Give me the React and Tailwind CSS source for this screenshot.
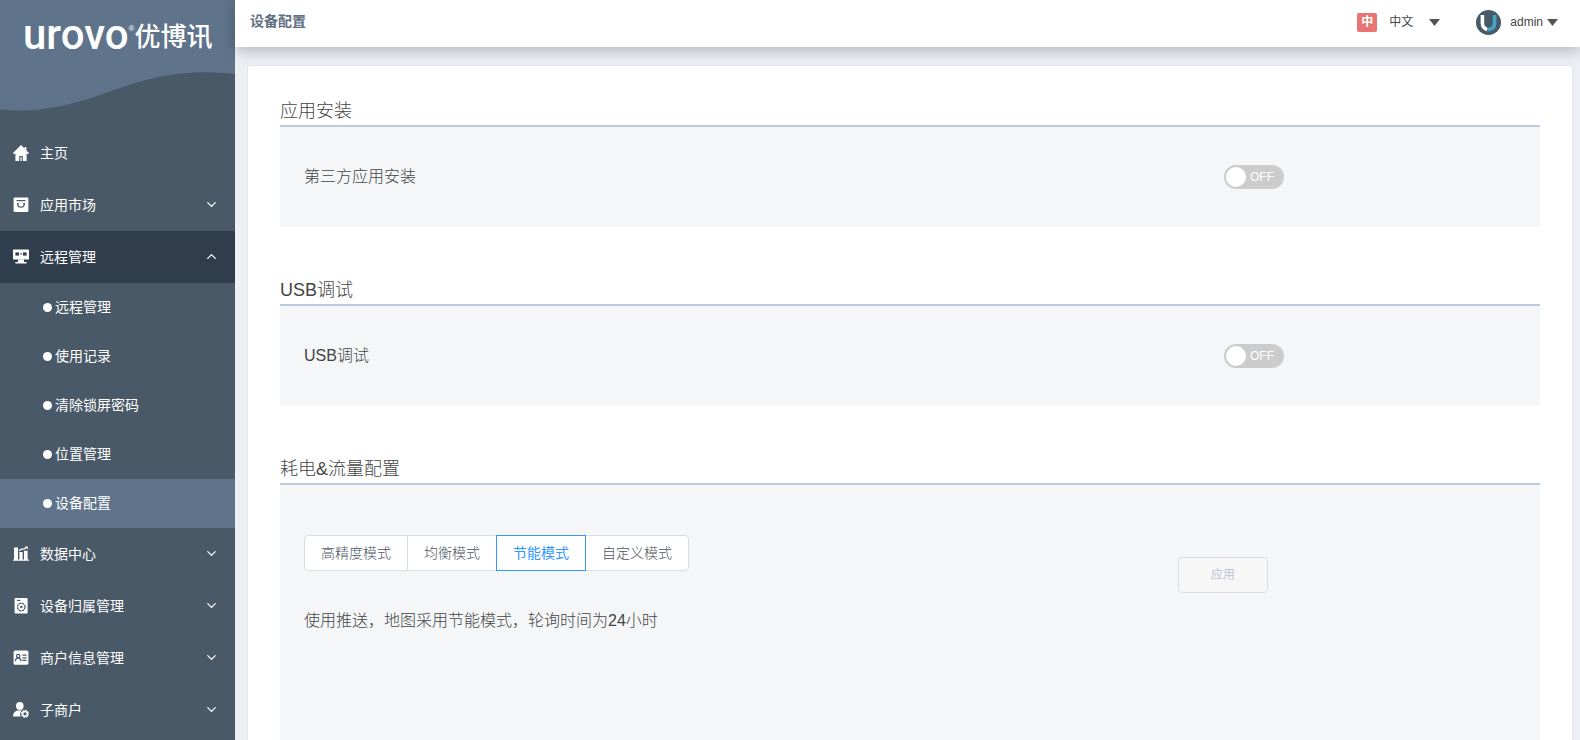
import { useState } from "react";
import { ChevronDown, ChevronUp } from "lucide-react";

const HomeIcon = () => (
  <svg viewBox="0 0 16 16" className="size-4" fill="#fff">
    <path d="M8 0 0 8v.8h2.400V16h3.800v-5h3.600v5h3.800V8.800H16V8L13.400 5.400V2h-1.800v1.600z" />
    <path d="M7.400 12h1.200v4H7.400z" />
  </svg>
);

const MarketIcon = () => (
  <svg viewBox="0 0 16 16" className="size-4" fill="none">
    <rect x="0.6" y="0.6" width="14.8" height="14.4" rx="1.2" fill="#fff" />
    <path d="M3.5 3.6h9" stroke="#4a5967" strokeWidth="1.2" />
    <path d="M4.8 6.600v.6a3.200 3 0 0 0 6.400 0v-.6" stroke="#4a5967" strokeWidth="1.2" />
    <path d="M4 6.600h1.800M10.200 6.600H12" stroke="#4a5967" strokeWidth="1.2" />
  </svg>
);

const RemoteIcon = () => (
  <svg viewBox="0 0 16 16" className="size-4" fill="#fff">
    <rect y="0.4" width="16" height="10" rx="0.6" />
    <path d="M5 10.400h6v2.600H13.600V14.400H2.400V13H5z" />
    <rect x="2.4" y="3.4" width="3.6" height="3.2" fill="#2f3d4c" />
    <rect x="10" y="3.4" width="3.6" height="3.2" fill="#2f3d4c" />
    <path d="M7 5h2" stroke="#2f3d4c" />
  </svg>
);

const DataIcon = () => (
  <svg viewBox="0 0 16 16" className="size-4" fill="#fff">
    <path d="M0 13.400h16V14.800H0zM1 1.400h4v12H1zM6.400 6h3.200v7.400H6.400zM11 4.800h3.600v8.600H11z" />
    <path d="M6 4.800 8.400 3.200h2.400L13.600 1.400" stroke="#fff" strokeWidth="1.3" fill="none" />
    <path d="M11.800.6h3v2.800z" />
  </svg>
);

const DeviceIcon = () => (
  <svg viewBox="0 0 16 16" className="size-4" fill="none">
    <rect x="1.6" y="0" width="13" height="15.4" rx="1.2" fill="#fff" />
    <path d="M4 2.4h3.400" stroke="#4a5967" strokeWidth="1.2" />
    <circle cx="8.3" cy="9" r="3.8" stroke="#4a5967" strokeWidth="1.3" strokeDasharray="2.4 0.6" />
    <circle cx="8.3" cy="9" r="1.2" fill="#4a5967" />
  </svg>
);

const MerchantIcon = () => (
  <svg viewBox="0 0 16 16" className="size-4" fill="none" stroke="#4a5967" strokeWidth="1.2">
    <rect x="0.6" y="0.6" width="14.8" height="14.2" rx="1.6" fill="#fff" stroke="none" />
    <circle cx="5.2" cy="6" r="1.7" />
    <path d="M2.300 11.200c.2-2.200 1.400-3.300 2.900-3.300s2.700 1.100 2.900 3.300M9.400 5.200H13.500M9.400 7.800H13.500M9.400 10.400H13.500" />
  </svg>
);

const SubMerchantIcon = () => (
  <svg viewBox="0 0 16 16" className="size-4" fill="#fff">
    <ellipse cx="6.800" cy="4" rx="3.800" ry="4" />
    <path d="M0 14.400c0-3.600 1.800-5.400 4.600-6h4.400c-1.800 1.400-2.400 3.600-1.400 6z" />
    <circle cx="12" cy="11.800" r="2.500" fill="none" stroke="#fff" strokeWidth="1.700" />
    <circle cx="12" cy="11.800" r="3.700" fill="none" stroke="#fff" strokeWidth="0.900" strokeDasharray="1.600 1.300" />
  </svg>
);

const menu = [
  { label: "主页", icon: HomeIcon },
  { label: "应用市场", icon: MarketIcon, children: [] },
  {
    label: "远程管理",
    icon: RemoteIcon,
    open: true,
    children: ["远程管理", "使用记录", "清除锁屏密码", "位置管理", "设备配置"],
  },
  { label: "数据中心", icon: DataIcon, children: [] },
  { label: "设备归属管理", icon: DeviceIcon, children: [] },
  { label: "商户信息管理", icon: MerchantIcon, children: [] },
  { label: "子商户", icon: SubMerchantIcon, children: [] },
];

const modes = ["高精度模式", "均衡模式", "节能模式", "自定义模式"];

function Caret() {
  return (
    <svg viewBox="0 0 11 7" className="h-[7px] w-[11px]" fill="#555">
      <path d="M0 0h11L5.500 7z" />
    </svg>
  );
}

function Logo() {
  return (
    <div className="relative h-[127px] bg-[#5f748b]">
      <svg viewBox="0 0 235 127" preserveAspectRatio="none" className="absolute inset-0 size-full">
        <path d="M0 109.500C40 114 75 104 110 91.500S180 68 235 74V127H0z" fill="#4a5967" />
      </svg>
      <div className="relative flex h-[74px] items-center whitespace-nowrap pl-[23px] leading-none text-white">
        <span className="-mt-1 font-[Roboto] text-[42px] font-medium">urovo</span>
        <sup className="-mt-2 text-[8px]">®</sup>
        <span className="text-[26px] font-medium">优博讯</span>
      </div>
    </div>
  );
}

function Sidebar() {
  const [active, setActive] = useState("设备配置");

  return (
    <aside className="w-[235px] shrink-0 bg-[#4a5967] text-sm text-white">
      <Logo />
      <nav>
        {menu.map(({ label, icon: Icon, open, children }) => (
          <div key={label}>
            <button
              type="button"
              aria-expanded={children ? Boolean(open) : undefined}
              className={`flex h-[52px] w-full items-center pb-px pl-[13px] pr-4 ${open ? "bg-[#2f3d4c]" : ""}`}
            >
              <Icon />
              <span className="ml-[11px] flex-1 text-left">{label}</span>
              {children && (open ? <ChevronUp size={15} strokeWidth={2} /> : <ChevronDown size={15} strokeWidth={2} />)}
            </button>
            {open &&
              children.map((item) => (
                <a
                  key={item}
                  href="#"
                  onClick={() => setActive(item)}
                  className={`flex h-[49px] items-center gap-[3px] pb-px pl-[43px] ${item === active ? "bg-[#5f748b]" : ""}`}
                >
                  <span className="size-[9px] rounded-full bg-white" />
                  {item}
                </a>
              ))}
          </div>
        ))}
      </nav>
    </aside>
  );
}

function Header() {
  return (
    <header className="relative z-10 flex h-[47px] items-center justify-between bg-white pb-[3px] pl-[15px] pr-[22px] text-xs text-[#444] shadow-[0_4px_14px_rgba(0,0,0,0.24)]">
      <h1 className="pb-0.5 text-sm font-bold text-[#5f6f80]">设备配置</h1>
      <div className="flex items-center">
        <button type="button" aria-haspopup="true" className="flex items-center">
          <span className="flex h-[19px] w-5 items-center justify-center rounded-xs bg-[#e87474] font-bold text-white">中</span>
          <span className="ml-3 mr-4">中文</span>
          <Caret />
        </button>
        <button type="button" aria-haspopup="true" className="ml-9 flex items-center">
          <svg viewBox="0 0 25 25" className="size-[25px]" fill="none" strokeWidth="3.600">
            <circle cx="12.500" cy="12.500" r="12.500" fill="#4a5967" />
            <path d="M18.600 5v8c0 4.400-2.400 6.600-7 6.600" stroke="#44a5c8" />
            <path d="M6.400 5v8c0 3.600 1.400 5.600 4.800 6.400" stroke="#fff" />
          </svg>
          <span className="ml-[9px] mr-1">admin</span>
          <Caret />
        </button>
      </div>
    </header>
  );
}

function Section({ title, className = "", children }) {
  return (
    <section className={`flex flex-col ${className}`}>
      <h2 className="flex h-[30px] items-center pt-0.5 text-lg font-light">{title}</h2>
      <div className="flex-1 border-t-2 border-[#bccadf] bg-[#f5f6f8]">{children}</div>
    </section>
  );
}

function SwitchRow({ label }) {
  return (
    <label className="flex h-[100px] items-center">
      <span className="-mr-px w-3/4 pl-6 text-base font-light">{label}</span>
      <input type="checkbox" role="switch" className="peer sr-only" />
      <span className="flex h-6 w-[60px] cursor-pointer items-center gap-1 rounded-full bg-[#ccc] px-0.5 text-xs text-white peer-checked:flex-row-reverse peer-checked:bg-[#409eff]">
        <span className="size-5 rounded-full bg-white" />
        OFF
      </span>
    </label>
  );
}

function PowerSettings() {
  const [mode, setMode] = useState("节能模式");

  return (
    <div className="flex">
      <div className="w-5/8 pl-6 pt-[50px]">
        <div role="radiogroup" aria-label="耗电&流量配置" className="flex text-sm font-light text-[#4a5462]">
          {modes.map((name) => (
            <label
              key={name}
              className={`relative -ml-px flex h-9 cursor-pointer items-center border bg-white px-4 first:ml-0 first:rounded-l last:rounded-r ${
                name === mode ? "z-10 border-[#3399ff] font-normal text-[#3399ff]" : "border-[#d8dce5]"
              }`}
            >
              <input
                type="radio"
                name="mode"
                className="sr-only"
                checked={name === mode}
                onChange={() => setMode(name)}
              />
              {name}
            </label>
          ))}
        </div>
        <p className="mt-[38px] text-base font-light">使用推送，地图采用节能模式，轮询时间为24小时</p>
      </div>
      <div className="flex w-1/4 justify-center pr-1 pt-[72px]">
        <button
          type="button"
          disabled
          className="h-9 w-[90px] rounded border border-[#d8dce5] bg-[#f7f7f7] text-xs text-[#bbc5d5]"
        >
          应用
        </button>
      </div>
    </div>
  );
}

export default function App() {
  return (
    <div className="flex min-h-screen bg-[#ecf0f5] font-['Liberation_Sans','Noto_Sans_CJK_SC',sans-serif] text-[#444]">
      <Sidebar />
      <div className="flex min-w-0 flex-1 flex-col">
        <Header />
        <main className="ml-3 mr-[7px] mt-[18px] flex flex-1 flex-col rounded-t border border-b-0 border-[#e2e7f0] bg-white px-8 pt-[29px]">
          <Section title="应用安装">
            <SwitchRow label="第三方应用安装" />
          </Section>
          <Section title="USB调试" className="mt-[47px]">
            <SwitchRow label="USB调试" />
          </Section>
          <Section title="耗电&流量配置" className="mt-[47px] flex-1">
            <PowerSettings />
          </Section>
        </main>
      </div>
    </div>
  );
}
